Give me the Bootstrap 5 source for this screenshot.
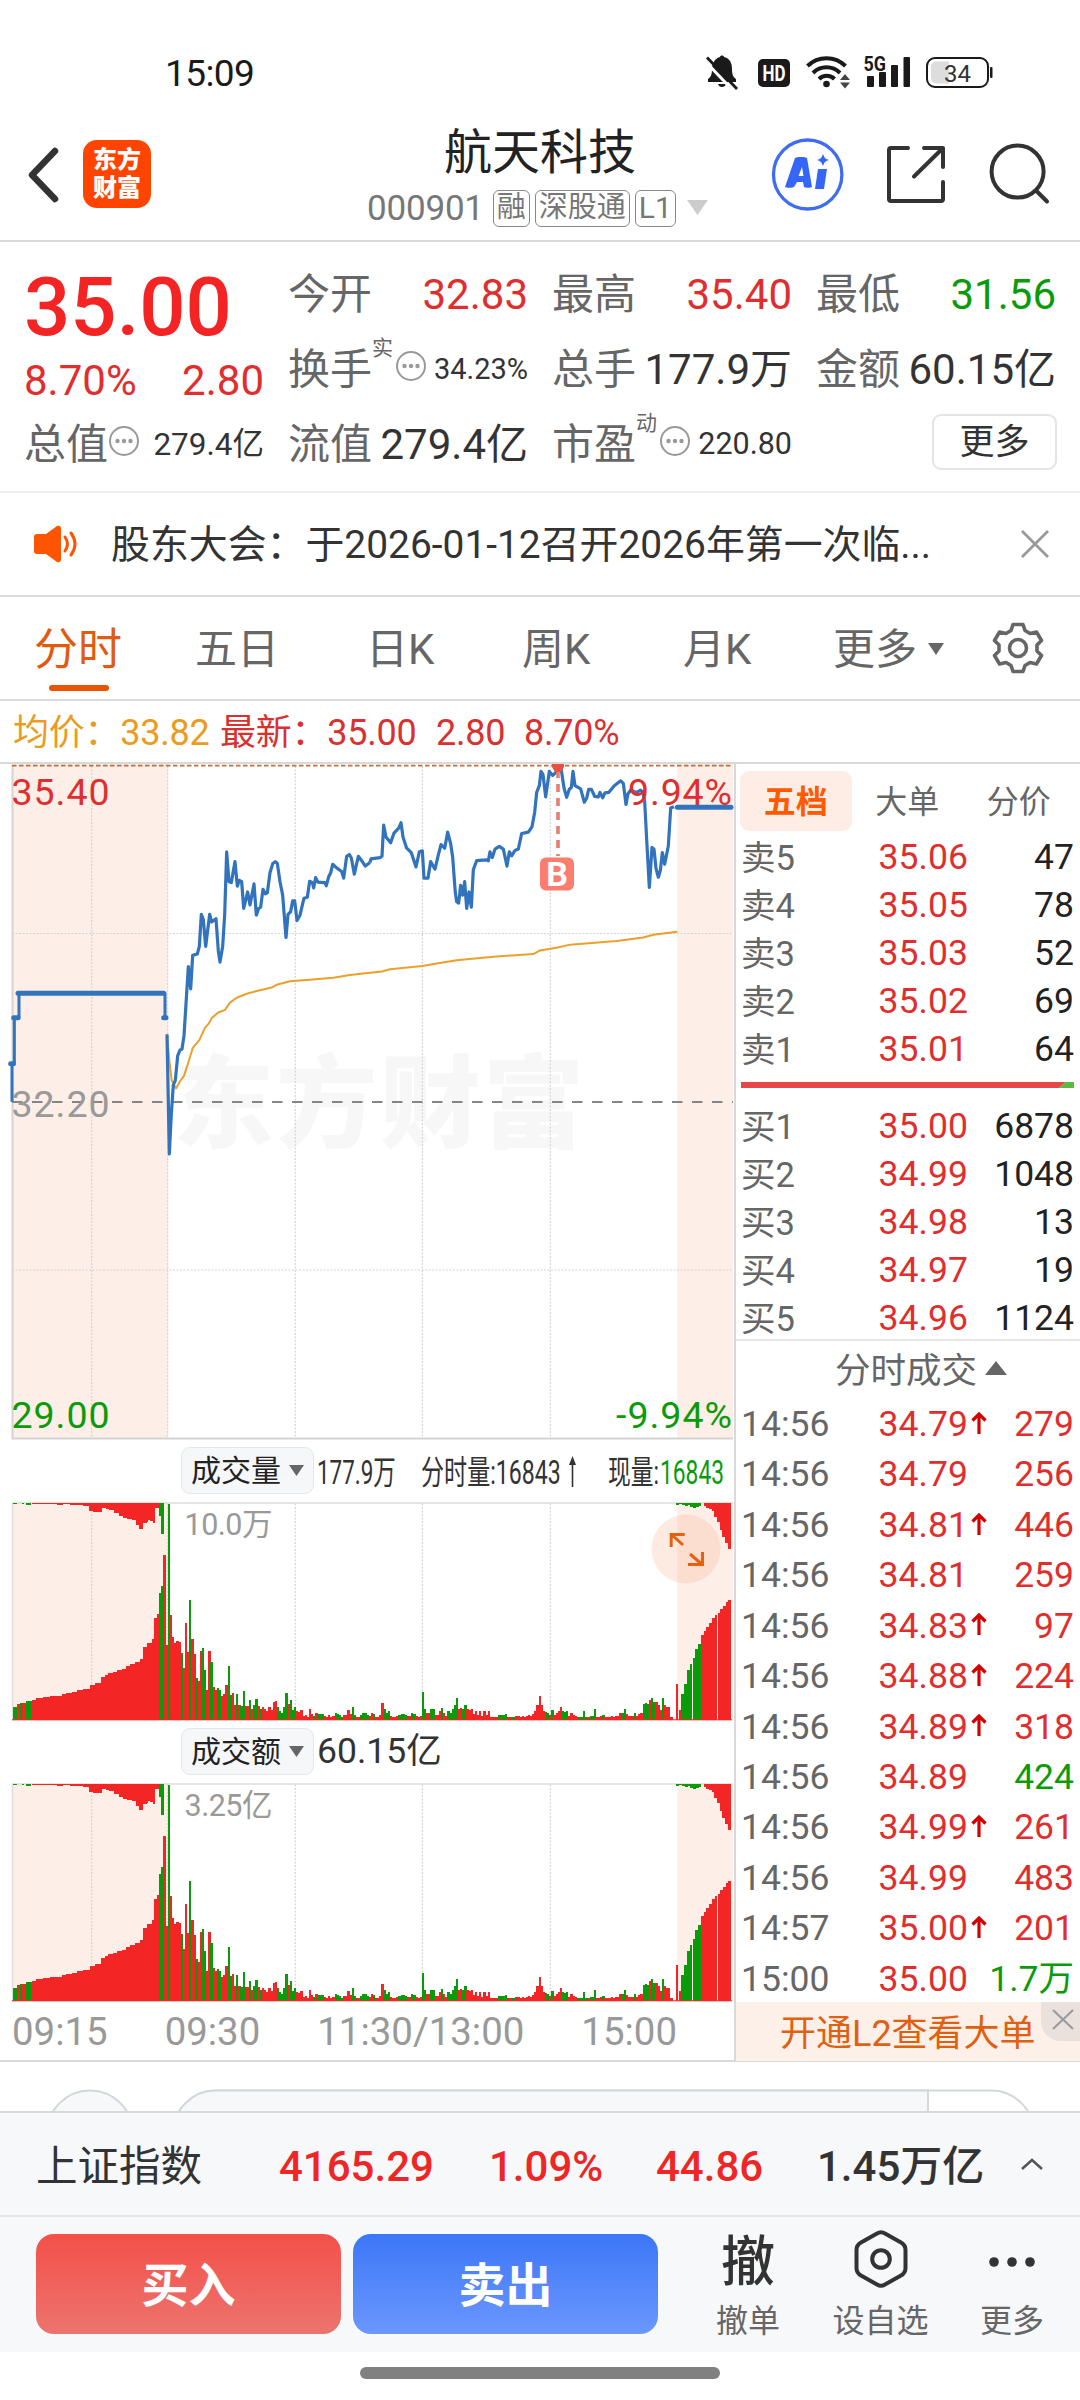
<!DOCTYPE html>
<html lang="zh-CN">
<head>
<meta charset="utf-8">
<meta name="viewport" content="width=device-width, initial-scale=1">
<title>航天科技 000901</title>
<link rel="stylesheet" href="https://cdn.jsdelivr.net/npm/bootstrap@5.3.0/dist/css/bootstrap.min.css">
<style>
:root{--up:#e02e2e;--down:#0a9b0a;--mut:#666;--ink:#333;--line:#d9d9d9}
html,body{width:1080px;height:2400px;overflow:hidden}
body{font-family:Roboto,"Noto Sans CJK SC",sans-serif;font-size:42px;line-height:1;color:var(--ink);background:#fff;white-space:nowrap}
svg{display:block;flex:none}
text{font-family:Roboto,"Noto Sans CJK SC",sans-serif}
.up{color:var(--up)}.down{color:var(--down)}.mut{color:var(--mut)}
.statusbar{height:108px;padding:0 86px 0 165px}
.clock{font-size:37px;color:#1a1a1a;letter-spacing:-.6px;padding-top:55px}
.topbar{height:134px;border-bottom:2px solid var(--line);padding:0 27px 0 28px}
.logo-em{width:68px;height:68px;border-radius:14px;background:#ff4400;color:#fff;font-weight:900;font-size:24px;line-height:28px;padding-top:6px}
.stock-name{font-size:48px;color:#222;line-height:56px}
.code-row{gap:5px;font-size:35px;color:#777;height:38px}
.mtag{border:1.5px solid #888;border-radius:6px;height:37px;padding:0 3px;font-size:29px;line-height:33px}
.quote{height:249px;padding:15px 24px 0;gap:24px}
.q-col{width:240px}
.q-cell{height:75px}
.price-big{font-size:81.500px;font-weight:500;color:#f42424;height:92px;line-height:92px;padding-top:4px;margin-bottom:-6px}
.q-chg{height:64px;padding-top:12px}
.supn{font-size:21px;align-self:flex-start;margin-top:6px}
.more-btn{width:125px;height:56px;border:2px solid #e4e4e4;border-radius:9px;font-size:35px;color:#333;margin-top:-5px}
.notice{height:106px;border-top:2px solid #eee;border-bottom:2px solid var(--line);padding:0 29px 0 33px;font-size:38.900px}
.tabs-k{height:104px;border-bottom:2px solid var(--line);font-size:42px;color:var(--mut);padding-top:4px}
.tabs-k .on{color:#e05a10;font-size:44px}
.tab-line{width:60px;height:6px;border-radius:3px;background:#ea5504;left:15px;top:57px}
.avg{height:63px;border-bottom:2px solid var(--line);font-size:36px;color:#d93030;padding:3px 0 0 13px;letter-spacing:-.25px}
.main-l{width:734px}
.main-r{width:346px;border-left:2px solid var(--line)}
.main-area{height:1298px;border-bottom:2px solid var(--line)}
.sub-h{padding-left:181px;gap:4px}
.pick{width:133px;height:47px;border:1.5px solid #e4e6ea;border-radius:9px;background:#f6f7f9;font-size:30px;color:#222;gap:8px}
.axis{height:60px;font-size:38.400px;color:#999;padding:0 57px 0 12px}
.lv-tabs{height:70px;padding-left:4px;font-size:32px;color:var(--mut);margin-top:2px}
.lv-tabs>div{width:111.500px;height:60px;padding-top:2px}
.lv-tabs .on{background:#feede5;color:#ff5a00;font-weight:700;border-radius:9px}
.lv,.tk{padding:2px 6px 0 5px;font-size:35.500px}
.lv{height:48px}.tk{height:50.450px;padding-top:5px}
.lv>:first-child,.tk>:first-child{width:137.500px;color:var(--mut)}
.lv>:first-child{font-size:34.500px}
.pr{width:94px;letter-spacing:.1px}
.lv .qty{color:#222}
.deal-h{height:58px;border-top:2px solid #e8e8e8;font-size:35.500px;gap:8px;margin-top:-3px;padding:6px 0 0 99px}
.l2{height:59px;background:#fdf0e9;color:#e06010;font-size:36px;padding:4px 0 0 44px}
.l2-x{right:0;top:0;width:39px;height:39px;border-bottom-left-radius:20px;background:#eae0dc}
.peek{height:49px}
.idx{height:106px;background:#f7f8fa;border-top:2px solid #d5d8dc;border-bottom:2px solid #e4e6e9;padding:5px 36px 0}
.idx .num{font-weight:500;color:#ee2626}
.acts{height:135px;background:#f7f8fa;padding:17px 0 0 36px}
.trade{width:305px;height:100px;border:0;border-radius:18px;font-size:47px;font-weight:700;color:#fff;padding:2px 0 0!important}
.buy{background:linear-gradient(#f4504a,#ec746d)}
.sell{background:linear-gradient(#3c77f7,#6b97fe)}
.act{font-size:32px;color:var(--mut)}
.act-i{height:54px;margin-bottom:17px}
.home-ind{width:360px;height:12px;border-radius:6px;background:#808080;margin:15px auto 0}
</style>
</head>
<body>
<svg width="0" height="0" class="position-absolute"><defs>
<symbol id="dots" viewBox="0 0 32 32"><circle cx="16" cy="16" r="14" fill="none" stroke="#999" stroke-width="2"/><g fill="#999"><circle cx="9.5" cy="16" r="2.200"/><circle cx="16" cy="16" r="2.200"/><circle cx="22.500" cy="16" r="2.200"/></g></symbol>
<symbol id="arr" viewBox="0 0 16 24"><path d="M8 23V3M1.500 9.500 8 3l6.500 6.500" fill="none" stroke="#d40000" stroke-width="3.200"/></symbol>
</defs></svg>

<div class="statusbar d-flex justify-content-between">
  <div class="clock">15:09</div>
  <svg width="290" height="40" viewBox="704 52 290 40" style="margin-top:52px">
    <g fill="#1a1a1a">
      <path d="M708 82v-3c3-2 4-5 4-10 0-7 4-11 8-12 0-2 4-2 4 0 5 1 8 5 8 12 0 5 1 8 4 10v3zM718 84h8c-1 4-7 4-8 0z"/>
      <path d="M703.500 59.500 733 90.500" stroke="#fff" stroke-width="3"/>
      <path d="M707 57.500 737 89" stroke="#1a1a1a" stroke-width="2.800"/>
      <rect x="758" y="59" width="32" height="28" rx="5"/>
      <text x="774" y="81" text-anchor="middle" font-size="22" font-weight="700" fill="#fff" textLength="23" lengthAdjust="spacingAndGlyphs">HD</text>
      <circle cx="826.500" cy="84" r="3.300"/>
      <g fill="none" stroke="#1a1a1a" stroke-width="4"><path d="M807.500 66a27 27 0 0 1 38 0M813 73a19 19 0 0 1 27 0M819 79a11 11 0 0 1 15.500 0"/></g>
      <path d="M840 80l5-6 5 6zM840 82.500l5 6 5-6z" fill="#444"/>
      <text x="863.500" y="70.500" font-size="20" font-weight="700" textLength="22.500" lengthAdjust="spacingAndGlyphs">5G</text>
      <rect x="867" y="76" width="7" height="11" rx="1"/><rect x="879" y="72" width="7" height="15" rx="1"/><rect x="891" y="65" width="7" height="22" rx="1"/><rect x="903.500" y="57" width="6.500" height="30" rx="1"/>
      <rect x="927" y="58" width="61" height="29" rx="8" fill="none" stroke="#1a1a1a" stroke-width="2"/>
      <path d="M936 61.500h13v22h-13a5 5 0 0 1-5-5v-12a5 5 0 0 1 5-5z" fill="#ddd"/>
      <rect x="990" y="67" width="2.500" height="11" rx="1"/>
      <text x="957.500" y="81.500" text-anchor="middle" font-size="24" fill="#333">34</text>
    </g>
  </svg>
</div>

<div class="topbar d-flex">
  <div class="d-flex" style="width:270px">
    <svg width="32" height="56" viewBox="0 0 32 56" style="margin-top:39px"><path d="M27 4 4 28l23 24" fill="none" stroke="#333" stroke-width="6.500" stroke-linecap="round" stroke-linejoin="round"/></svg>
    <div class="logo-em text-center" style="margin:32px 0 0 23px">东方<br>财富</div>
  </div>
  <div style="padding-top:17px">
    <div class="stock-name" style="padding-left:146px">航天科技</div>
    <div class="code-row d-flex align-items-center" style="margin:8px 0 0 69px"><span style="letter-spacing:-.2px;margin-right:4px">000901</span><span class="mtag">融</span><span class="mtag">深股通</span><span class="mtag" style="font-size:30px">L1</span><svg class="ms-1" width="24" height="16"><path d="M2 0h21L12.500 15z" fill="#ccc"/></svg></div>
  </div>
  <svg class="ms-auto" width="284" height="76" viewBox="770 137 284 76" style="margin-top:29px">
    <ellipse cx="808.700" cy="174.500" rx="34.200" ry="34.500" fill="none" stroke="#3f6cf2" stroke-width="3.300"/>
    <g fill="#3566f5"><path fill-rule="evenodd" d="M796 158c1-1.500 11-1.500 12 0l5 29c-1 1-7 1-8 0l-1-5h-6l-3 5c-1 1-8 1-9 0zM803 167l-3.500 9h5z"/><path d="M819 169h9l-3 20h-9z"/><path d="M824 154c1.500 4 2.500 5 6 6-3.500 1-4.500 2-6 6-1.500-4-2.500-5-6-6 3.500-1 4.500-2 6-6z"/></g>
    <g fill="none" stroke="#333" stroke-width="4" stroke-linecap="round" stroke-linejoin="round"><path d="M909 148h-17a2 2 0 0 0-2 2v49a2 2 0 0 0 2 2h50a2 2 0 0 0 2-2v-17M925 148h19v19M943 149l-28 27.500"/><circle cx="1018.600" cy="171.600" r="26"/><path d="M1037.500 191l10.500 10.500"/></g>
  </svg>
</div>

<div class="quote d-flex">
  <div class="q-col">
    <div class="price-big">35.00</div>
    <div class="q-chg d-flex justify-content-between align-items-center up"><span>8.70%</span><span>2.80</span></div>
    <div class="q-cell d-flex align-items-center"><span class="mut">总值</span><svg width="32" height="32" style="margin:-8px 0 0 0"><use href="#dots"/></svg><span class="ms-auto" style="font-size:31.500px">279.4亿</span></div>
  </div>
  <div class="q-col">
    <div class="q-cell d-flex align-items-center justify-content-between"><span class="mut">今开</span><span class="up">32.83</span></div>
    <div class="q-cell d-flex align-items-center"><span class="mut">换手</span><span class="supn mut">实</span><svg width="32" height="32" style="margin:-8px 0 0 2px"><use href="#dots"/></svg><span class="ms-auto" style="font-size:29px">34.23%</span></div>
    <div class="q-cell d-flex align-items-center justify-content-between"><span class="mut">流值</span><span>279.4亿</span></div>
  </div>
  <div class="q-col">
    <div class="q-cell d-flex align-items-center justify-content-between"><span class="mut">最高</span><span class="up">35.40</span></div>
    <div class="q-cell d-flex align-items-center justify-content-between"><span class="mut">总手</span><span>177.9万</span></div>
    <div class="q-cell d-flex align-items-center"><span class="mut">市盈</span><span class="supn mut">动</span><svg width="32" height="32" style="margin:-8px 0 0 2px"><use href="#dots"/></svg><span class="ms-auto" style="font-size:30.500px">220.80</span></div>
  </div>
  <div class="q-col">
    <div class="q-cell d-flex align-items-center justify-content-between"><span class="mut">最低</span><span class="down">31.56</span></div>
    <div class="q-cell d-flex align-items-center justify-content-between"><span class="mut">金额</span><span>60.15亿</span></div>
    <div class="q-cell d-flex align-items-center justify-content-end" style="margin-right:-1px"><div class="more-btn d-flex align-items-center justify-content-center">更多</div></div>
  </div>
</div>

<div class="notice d-flex align-items-center">
  <svg width="46" height="38" viewBox="0 0 46 38"><g fill="#ff5400"><path d="M4 9h9L24 1q4-1 4 3v30q0 4-4 3L13 29H4q-3 0-3-3V12q0-3 3-3z"/></g><g fill="none" stroke="#ff5400" stroke-width="3" stroke-linecap="round"><path d="M32 12q5 7 0 14M38 8q8 11 0 22"/></g></svg>
  <span style="margin:2px 0 0 32px">股东大会：于2026-01-12召开2026年第一次临...</span>
  <svg class="ms-auto" width="32" height="30"><path d="M3 2 29 28M29 2 3 28" stroke="#999" stroke-width="2.800"/></svg>
</div>

<div class="tabs-k d-flex align-items-center">
  <div class="on position-relative" style="margin-left:34px;width:161px">分时<span class="tab-line position-absolute"></span></div>
  <div style="width:171px">五日</div><div style="width:156px">日K</div><div style="width:161px">周K</div><div style="width:150px">月K</div>
  <div class="d-flex align-items-center">更多<svg width="18" height="14" style="margin:-3px 0 0 10px"><path d="M1 1h16L9 13z" fill="#666"/></svg></div>
  <svg width="54" height="54" viewBox="-27 -27 54 54" style="margin:-4px 0 0 46px"><g fill="none" stroke="#666" stroke-width="3.600" stroke-linejoin="round"><path d="M-5-23.500H5L7-17.500 12-14.500 18.500-16 23.500-7.500 19-3V3L23.500 7.500 18.500 16 12 14.500 7 17.500 5 23.500H-5L-7 17.500-12 14.500-18.500 16-23.500 7.500-19 3V-3L-23.500-7.500-18.500-16-12-14.500-7-17.500z"/><circle r="8.500"/></g></svg>
</div>

<div class="avg d-flex align-items-center"><span style="color:#eb9c1e;width:207px">均价：33.82</span><span style="width:216px">最新：35.00</span><span style="width:88px">2.80</span><span>8.70%</span></div>

<div class="main-area d-flex">
  <div class="main-l">
    <svg width="734" height="676" viewBox="0 764 734 676">
      <rect x="12" y="763" width="156" height="676" fill="#fdeee7"/><rect x="677.300" y="763" width="55.700" height="676" fill="#fdeee7"/>
      <text x="173" y="1139.500" font-size="101" font-weight="900" fill="#f7f7f7" textLength="411">东方财富</text>
      <g stroke="#d4d4d4" stroke-width="1.200" stroke-dasharray="2 1.500"><path d="M12 933.500H733M12 1270H733M91.700 766V1438M167.700 766V1438M295.300 766V1438M422.400 766V1438M550.300 766V1438"/></g>
      <path d="M12.500 765V1438.500H733" fill="none" stroke="#d3d3d3" stroke-width="2"/>
      <path d="M12 765.600H733" stroke="#c0703a" stroke-width="1.600" stroke-dasharray="4.500 2.500"/>
      <path d="M12 1102H733" stroke="#858585" stroke-width="2" stroke-dasharray="10.500 9.500"/>
      <g fill="none" stroke-linejoin="round">
        <g transform="translate(0 750) scale(.33333 .44643)">
          <path vector-effect="non-scaling-stroke" stroke="#eba02c" stroke-width="2" d="M501 637 508 695 515 740 528 758 540 742 552 730 565 700 578 668 598 650 615 622 626 613 636 600 655 588 675 582 690 566 710 555 740 546 770 540 815 532 830 526 870 518 920 515 1000 510 1050 504 1110 499"/>
          <path vector-effect="non-scaling-stroke" stroke="#3273bd" stroke-width="3" d="M36 788V703H43V600H57V545H495V600"/>
          <path vector-effect="non-scaling-stroke" stroke="#3273bd" stroke-width="5" stroke-linecap="round" d="M32 703H40M41 600H54M54 545H491M491 600H498"/>
          <path vector-effect="non-scaling-stroke" stroke="#3273bd" stroke-width="3.200" d="M501 637 508 905 514 815 520 750 526 740 533 685 540 672 546 670 552 640 565 485 572 535 578 460 592 457 598 440 604 368 610 380 617 440 629 368 635 385 648 378 655 450 660 475 668 440 674 370 680 228 687 295 694 297 705 250 712 305 718 292 725 295 731 355 743 318 750 347 762 300 769 370 776 355 782 352 789 312 796 322 802 320 810 275 818 255 826 250 832 254 840 295 848 325 858 420 864 368 872 362 878 338 884 338 891 382 900 370 912 332 922 330 929 294 937 297 941 309 947 286 954 296 974 297 979 304 986 284 992 275 998 256 1010 264 1025 272 1031 287 1040 238 1048 234 1054 242 1063 278 1075 238 1085 248 1096 260 1110 252"/>
        </g>
        <g transform="translate(370 750) scale(.33333 .44643)">
          <path vector-effect="non-scaling-stroke" stroke="#eba02c" stroke-width="2" d="M0 499 36 496 60 491 157 484 200 478 260 471 370 463 490 457 510 449 560 443 600 436 740 428 820 420 850 414 922 407"/>
          <path vector-effect="non-scaling-stroke" stroke="#3273bd" stroke-width="3.200" d="M0 252 3 244 30 241 36 238 41 168 48 195 62 208 72 186 86 175 93 163 99 195 110 220 124 230 138 262 148 228 157 226 162 287 174 287 182 250 195 267 205 235 213 212 224 220 233 184 242 210 248 240 256 320 260 340 266 343 272 303 278 325 284 295 290 355 297 318 304 352 310 268 320 248 350 246 355 248 360 228 367 241 375 222 388 216 400 222 411 260 418 228 425 237 435 225 445 222 455 187 475 184 486 172 494 140 500 95 508 80 513 48 519 55 527 105 538 48 548 57 558 50 565 40 574 45 582 85 590 106 598 88 604 84 609 48 615 80 632 87 643 117 650 108 656 88 664 88 674 104 685 105 690 95 698 107 705 96 716 95 733 80 752 69 760 75 768 122 774 98 782 90 800 95 812 90 820 97 824 115 830 200 838 308 846 218 852 222 858 265 865 285 871 270 877 230 884 256 895 215 902 130 912 127"/>
          <path vector-effect="non-scaling-stroke" stroke="#3273bd" stroke-width="5" stroke-linecap="round" d="M922 128H1083"/>
        </g>
      </g>
      <path d="M558 770V856" stroke="#e77f70" stroke-width="3.600" stroke-dasharray="8 6"/>
      <path d="M552 764h12v3l-3 5h-6l-3-5z" fill="#e8503f"/>
      <rect x="540" y="857.500" width="34" height="33" rx="6" fill="#fb7d6d"/>
      <text x="557" y="886" font-size="34" font-weight="700" fill="#fff" text-anchor="middle">B</text>
      <g font-size="37.500"><text x="11.500" y="805" fill="#e02e2e" textLength="98">35.40</text><text x="11.500" y="1117" fill="#999" textLength="98">32.20</text><text x="11.500" y="1428" fill="#0a9b0a" textLength="98">29.00</text><text x="732" y="805" fill="#e02e2e" text-anchor="end" textLength="104">9.94%</text><text x="732" y="1428" fill="#0a9b0a" text-anchor="end" textLength="116">-9.94%</text></g>
    </svg>
    <div class="sub-h d-flex align-items-center" style="height:61.500px">
      <div class="pick d-flex align-items-center justify-content-center">成交量<svg width="15" height="12"><path d="M0 0h15L7.500 11z" fill="#666"/></svg></div>
      <svg width="416" height="50" viewBox="318 1446 416 50"><g font-size="33" fill="#333"><text transform="translate(317 1484) scale(.68 1)">177.9万</text><text transform="translate(421 1484) scale(.7 1)">分时量:16843</text><text transform="translate(608 1484) scale(.69 1)">现量:</text><text transform="translate(660 1484) scale(.69 1)" fill="#0a9b0a">16843</text></g><path d="M572.500 1487v-24" stroke="#333" stroke-width="1.600"/><path d="M569 1465l3.500-9 3.500 9z" fill="#333"/></svg>
    </div>
    <div class="position-relative">
      <svg class="volchart" width="734" height="219" viewBox="0 1501.500 734 219" data-label="10.0万"></svg>
      <svg class="position-absolute" style="left:651px;top:12px" width="70" height="70" viewBox="-35 -35 70 70"><circle r="34.500" fill="#f9b794" fill-opacity=".28"/><path d="M-14.800-2V-14.500H-1.300M-14-14-3-4M16.500 3V15.500H2M4 5 15.500 15" fill="none" stroke="#e8600f" stroke-width="3"/></svg>
    </div>
    <div class="sub-h d-flex align-items-center" style="height:62.500px">
      <div class="pick d-flex align-items-center justify-content-center">成交额<svg width="15" height="12"><path d="M0 0h15L7.500 11z" fill="#666"/></svg></div>
      <span style="font-size:35.500px;margin-left:-1px">60.15亿</span>
    </div>
    <svg class="volchart" width="734" height="219" viewBox="0 1501.500 734 219" data-label="3.25亿"></svg>
    <div class="axis d-flex align-items-center justify-content-between"><span>09:15</span><span>09:30</span><span>11:30/13:00</span><span>15:00</span></div>
  </div>

  <div class="main-r">
    <div class="lv-tabs d-flex align-items-center"><div class="on d-flex align-items-center justify-content-center">五档</div><div class="d-flex align-items-center justify-content-center">大单</div><div class="d-flex align-items-center justify-content-center">分价</div></div>
    <div id="asks" style="margin-top:-3px"></div>
    <svg width="333" height="6" style="margin:9px 0 14px 5px"><path d="M0 0H325L318 6H0z" fill="#e54848"/><path d="M325 0H333V6H318z" fill="#5cb844"/></svg>
    <div id="bids"></div>
    <div class="deal-h d-flex align-items-center mut">分时成交<svg width="22" height="16" style="margin-top:-8px"><path d="M0 15h22L11 1z" fill="#666"/></svg></div>
    <div id="ticks"></div>
    <div class="l2 position-relative d-flex align-items-center"><span>开通L2查看大单</span><div class="l2-x position-absolute d-flex align-items-center justify-content-center"><svg width="22" height="22" style="margin:-4px 0 0 5px"><path d="M1 1 21 20M21 1 1 20" stroke="#999" stroke-width="2"/></svg></div></div>
  </div>
</div>

<div class="peek"><svg width="1080" height="49" viewBox="0 2062.500 1080 49"><g stroke="#d3d7db" stroke-width="2"><circle cx="90" cy="2134" r="43" fill="#f7f8fa"/><rect x="173" y="2091" width="861" height="86" rx="43" fill="#fff"/><path d="M928 2091H216a43 43 0 0 0-43 43H928z" fill="#f7f8fa"/></g></svg></div>

<div class="idx d-flex align-items-center">
  <span style="width:243px;font-size:41.500px">上证指数</span><span class="num" style="width:210px">4165.29</span><span class="num" style="width:167px">1.09%</span><span class="num" style="width:161px">44.86</span><span class="num" style="color:#333">1.45万亿</span>
  <svg class="ms-auto" width="24" height="14" style="margin-top:-6px"><path d="M2 12 12 3l10 9" fill="none" stroke="#555" stroke-width="2.500"/></svg>
</div>
<div class="acts d-flex">
  <button class="trade buy">买入</button><button class="trade sell" style="margin-left:12px">卖出</button>
  <div class="act d-flex flex-column align-items-center" style="margin-left:58px;width:64px"><div class="act-i fw-medium" style="font-size:54px;color:#333;line-height:58px">撤</div>撤单</div>
  <div class="act d-flex flex-column align-items-center" style="margin-left:52px;width:97px"><div class="act-i"><svg width="56" height="58" viewBox="-28 -29 56 58" style="margin-top:-4px"><g fill="none" stroke="#333" stroke-width="4" stroke-linejoin="round"><path d="M-4-25.500Q0-28 4-25.500L20-16.500Q24.500-14 24.500-9V9Q24.500 14 20 16.500L4 25.500Q0 28-4 25.500L-20 16.500Q-24.500 14-24.500 9V-9Q-24.500-14-20-16.500z"/><circle r="8.800"/></g></svg></div>设自选</div>
  <div class="act d-flex flex-column align-items-center" style="margin-left:51px;width:64px"><div class="act-i"><svg width="50" height="54"><g fill="#333"><circle cx="7" cy="28" r="4.800"/><circle cx="25" cy="28" r="4.800"/><circle cx="43" cy="28" r="4.800"/></g></svg></div>更多</div>
</div>
<div class="home-ind"></div>

<script src="https://cdn.jsdelivr.net/npm/bootstrap@5.3.0/dist/js/bootstrap.bundle.min.js"></script>
<script>
// Order book levels
const level = ([n,p,q]) => `<div class="lv d-flex align-items-center"><span>${n}</span><span class="pr up">${p}</span><span class="ms-auto qty">${q}</span></div>`;
asks.innerHTML = [['卖5','35.06',47],['卖4','35.05',78],['卖3','35.03',52],['卖2','35.02',69],['卖1','35.01',64]].map(level).join('');
bids.innerHTML = [['买1','35.00',6878],['买2','34.99',1048],['买3','34.98',13],['买4','34.97',19],['买5','34.96',1124]].map(level).join('');
// Tick list: time, price, arrow, quantity, direction
ticks.innerHTML = [['14:56','34.79',1,'279'],['14:56','34.79',0,'256'],['14:56','34.81',1,'446'],['14:56','34.81',0,'259'],['14:56','34.83',1,'97'],['14:56','34.88',1,'224'],['14:56','34.89',1,'318'],['14:56','34.89',0,'424','down'],['14:56','34.99',1,'261'],['14:56','34.99',0,'483'],['14:57','35.00',1,'201'],['15:00','35.00',0,'1.7万','down']]
 .map(([t,p,a,q,c]) => `<div class="tk d-flex align-items-center"><span>${t}</span><span class="pr up">${p}</span>${a?'<svg width="16" height="24" style="margin:-4px 0 0 -2px"><use href="#arr"/></svg>':''}<span class="ms-auto ${c||'up'}">${q}</span></div>`).join('');

// Minute volumes: colour + height in chart units, baseline 720
const R='#f42525', G='#0a9b0a';
const morning='g538 r262 r207 r192 r196 r193 g165 r129 r241 r169 g298 r202 r163 g103 r96 r171 g179 g125 r73 r170 g144 r82 r74 g78 g73 r59 r63 r86 g134 g61 r66 r37 g64 r36 g34 g71 r34 r34 g48 r28 g38 g51 r34 g26 r31 r28 r23 r31 r24 r45 r46 g32 g23 g17 g32 g67 r39 g48 g24 g32 r21 r20 r25 r10 r13 r8 r26 r15 g10 r17 g14 g15 g14 r10 r7 r12 r8 r9 g17 g15 g12 g8 r11 r12 r25 r14 g31 g12 r7 r6 g11 g16 g18 g11 r9'.split(' ');
const rest='r16 g14 r8 r6 r11 r41 g26 g18 g21 r10 r6 r8 r10 g13 g14 g14 g13 r9 r9 g17 g15 r10 r8 r9 g68 g26 r18 r16 g28 g26 r13 r11 r23 g30 r18 r9 g21 g16 g26 g36 g55 r28 r29 g26 g38 r27 r25 r26 r15 r21 r13 r22 r10 r21 r12 r23 r8 r6 r8 r8 g11 g11 g12 g14 r8 r7 g6 g6 r9 r9 r8 r9 r8 r9 r11 r10 r15 r23 r36 r60 r36 r23 g20 g18 r11 g25 r12 r16 r22 r33 g21 g20 g21 r10 r16 r12 r10 g8 g7 g8 g23 g7 r6 g10 g10 g26 r7 r6 r9 g12 r7 r6 r7 r10 r6 r9 r10 r17 g16 g27 r15 r9 r10 r9 g16 r9 r14 r16 g40 g41 g40 r48 g55 g43 r43 r36 r25 g55 r36 r31 r32 r6'.split(' ');
const rect=(x,y,w,h,f)=>`<rect x="${x.toFixed(2)}" y="${y}" width="${w}" height="${h}" fill="${f}"/>`;
let bars='';
const put=(a,x0,step)=>a.forEach((s,i)=>{const h=+s.slice(1);bars+=rect(x0+i*step,720-h,6.9,h,s[0]=='r'?R:G)});
put(morning,503,6.42); put(rest,1112.5,6.37);
const close=[[920,'r',89],[929,'r',25],[937,'g',64],[946,'g',88],[954,'g',123],[962,'g',140],[971,'g',153],[979,'g',175],[987,'g',188],[996,'r',212],[1004,'r',220],[1012,'r',231],[1021,'r',240],[1029,'r',253],[1037,'r',262],[1046,'r',267],[1054,'r',275],[1062,'r',283],[1070,'r',293],[1078,'r',298]];
close.forEach(([x,c,h])=>bars+=rect(x+1107,720-h,8.2,h,c=='r'?R:G));
[[920,'g',5],[929,'r',4],[937,'g',5],[946,'g',9],[954,'g',6],[962,'g',11],[971,'g',12],[979,'g',11],[987,'g',8],[1002,'r',7],[1010,'r',12],[1018,'r',16],[1026,'r',20],[1034,'r',35],[1042,'r',48],[1050,'r',67],[1058,'r',84],[1067,'r',101],[1076,'r',114]].forEach(([x,c,h])=>bars+=rect(x+1109,180,8.4,h,c=='r'?R:G));
const auction=`<path fill="${R}" d="M38 720V688H52V680H66V678H78V674H95V670H108V667H130V664H150V660H185V656H198V653H215V650H232V646H250V643H270V634H285V629H303V613H315V608H325V604H338V600H350V597H365V593H378V586H390V581H405V576H420V568H428V540H442V528H455V518H462V466H470V457H476V720zM490 310H497V533H503V720H490z"/>
<path fill="${G}" d="M38 720V688H52V720zM60 720V679H66V720zM78 720V674H92V720zM476 720V405H484V387H491V720zM38 180H52V184H38zM66 180H72V184H66zM78 180H92V185H78zM476 180H491V258H483V212H476z"/>
<path fill="${R}" d="M95 180V182H135V184H170V186H188V184H210V186H225V185H250V187H268V201H280V202H305V194H318V196H328V199H343V205H358V214H368V218H380V220H395V222H407V234H418V244H430V230H440V228H445V223H450V225H458V229H464V192H476V180z"/>`;
document.querySelectorAll('.volchart').forEach(s=>s.innerHTML=`<rect x="12" y="1502" width="156" height="218" fill="#fdeee7"/><rect x="677.3" y="1502" width="55.7" height="218" fill="#fdeee7"/>
<path d="M12 1502.5H733" stroke="#dcdcdc" stroke-width="1.5"/><path d="M12.500 1502V1720" stroke="#ddd" stroke-width="1.5"/>
<path d="M91.700 1503V1719M167.700 1503V1719M295.300 1503V1719M422.400 1503V1719M550.300 1503V1719" stroke="#d4d4d4" stroke-width="1.2" stroke-dasharray="2 1.5"/>
<g transform="translate(0 1430) scale(.33333 .40177)" shape-rendering="crispEdges">${auction}${bars}</g><path d="M12 1719.3H732" stroke="${R}" stroke-width="1"/>
<text x="184.500" y="1534.500" font-size="30.500" fill="#999" textLength="88">${s.dataset.label}</text>`);
</script>
</body>
</html>
